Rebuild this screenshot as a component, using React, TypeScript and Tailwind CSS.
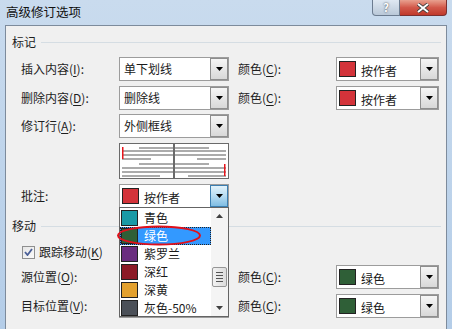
import React from 'react';

const font = "font-['Noto_Sans_CJK_SC',sans-serif]";

function Arrow({ active = false }: { active?: boolean }) {
  return (
    <div
      className={
        active
          ? 'flex w-[18px] items-center justify-center border border-[#3c7fb1] bg-gradient-to-b from-[#e3f3fb] via-[#b6dcf2] to-[#7fbde3]'
          : 'flex w-[18px] items-center justify-center border border-[#8e8e8e] bg-gradient-to-b from-[#f6f6f6] to-[#d8d8d8]'
      }
    >
      <svg width="7" height="4" viewBox="0 0 7 4">
        <path d="M0 0h7L3.5 4z" fill="#000" />
      </svg>
    </div>
  );
}

function Combo({
  w,
  text,
  swatch,
  active = false,
}: {
  w: string;
  text: string;
  swatch?: string;
  active?: boolean;
}) {
  return (
    <div className={`flex h-[24px] ${w} border border-[#9c9c9c] bg-white`}>
      <div className="flex flex-1 items-center gap-[5px] pl-[2px]">
        {swatch && (
          <div className="h-[16px] w-[17px] border border-[#222]" style={{ background: swatch }} />
        )}
        <span className={swatch ? 'text-[12px] text-[#1a1a1a] pt-[3px]' : 'pl-[2px] text-[12px] text-[#1a1a1a]'}>
          {text}
        </span>
      </div>
      <Arrow active={active} />
    </div>
  );
}

function Label({ text, k, w = 'w-[98px]' }: { text: string; k: string; w?: string }) {
  if (!k) return <div className={`${w} text-[12px] text-[#1e1e1e]`}>{text}:</div>;
  return (
    <div className={`${w} text-[12px] text-[#1e1e1e]`}>
      {text}(<span className="underline underline-offset-2">{k}</span>):
    </div>
  );
}

function Row({ label, k, combo, color, mt }: { label: string; k: string; combo: React.ReactNode; color?: string; mt: string }) {
  return (
    <div className={`${mt} flex items-center pl-[15px]`}>
      <Label text={label} k={k} />
      {combo}
      {color && (
        <>
          <div className="ml-[9px]">
            <Label text="颜色" k="C" />
          </div>
          <Combo w="w-[103px]" text={color === 'red' ? '按作者' : '绿色'} swatch={color === 'red' ? '#d3333a' : '#2f5f37'} />
        </>
      )}
    </div>
  );
}

function Header({ text, mt }: { text: string; mt: string }) {
  return (
    <div className={`${mt} flex h-[16px] items-center pl-[6px] pr-[5px]`}>
      <span className="text-[12px] text-[#1e1e1e]">{text}</span>
      <div className="ml-[5px] h-px flex-1 bg-[#d5dde3]" />
    </div>
  );
}

function Preview({ mirror }: { mirror?: boolean }) {
  const lines = [
    [19, 53, 4],
    [2, 53, 7],
    [2, 53, 11],
    [2, 31, 15],
    [19, 53, 20],
    [2, 53, 24],
    [2, 53, 28],
    [2, 40, 32],
  ];
  return (
    <div className="h-[36px] w-[55px] border border-[#6a6a6a] bg-white">
      <svg width="53" height="34" viewBox="0 0 53 34">
        {lines.map(([a, b, y], i) => {
          const x1 = mirror ? 53 - b : a;
          const x2 = mirror ? 53 - a : b;
          return <rect key={i} x={x1} y={y - 1} width={x2 - x1} height="2" fill="#ababab" />;
        })}
        {mirror ? (
          <rect x="49" y="20" width="1.5" height="12" fill="#e8141b" />
        ) : (
          <rect x="2" y="3" width="1.5" height="12" fill="#e8141b" />
        )}
      </svg>
    </div>
  );
}

const items = [
  ['青色', '#1a9aa6'],
  ['绿色', '#2f5f37'],
  ['紫罗兰', '#6a2d7f'],
  ['深红', '#8c1a26'],
  ['深黄', '#e3a12f'],
  ['灰色-50%', '#4b5058'],
];

function DropList() {
  return (
    <div className="absolute left-[113px] top-[181px] flex h-[110px] w-[110px] border border-[#646464] bg-white">
      <div className="flex flex-1 flex-col pt-px">
        {items.map(([name, c], i) => (
          <div
            key={name}
            className={
              i === 1
                ? 'flex h-[18px] items-center gap-[6px] border border-dotted border-[#222] bg-[#3399ff] text-white'
                : 'flex h-[18px] items-center gap-[6px] border border-transparent text-[#1a1a1a]'
            }
          >
            <div className="h-[16px] w-[17px] border border-[#222]" style={{ background: c }} />
            <span className="text-[12px]">{name}</span>
          </div>
        ))}
      </div>
      <div className="flex w-[17px] flex-col items-center justify-between bg-[#f4f4f4] py-[6px]">
        <svg width="7" height="4" viewBox="0 0 7 4">
          <path d="M0 4h7L3.5 0z" fill="#404040" />
        </svg>
        <div className="mt-[49px] flex h-[20px] w-[15px] flex-col items-center justify-center gap-[2px] rounded-[2px] border border-[#969696] bg-gradient-to-r from-[#f2f2f2] to-[#dcdcdc]">
          <div className="h-px w-[7px] bg-[#555]" />
          <div className="h-px w-[7px] bg-[#555]" />
          <div className="h-px w-[7px] bg-[#555]" />
          <div className="h-px w-[7px] bg-[#555]" />
        </div>
        <div className="flex-1" />
        <svg width="7" height="4" viewBox="0 0 7 4">
          <path d="M0 0h7L3.5 4z" fill="#404040" />
        </svg>
      </div>
      <svg className="absolute left-[-4px] top-[17px]" width="90" height="22" viewBox="0 0 90 22">
        <ellipse cx="43" cy="10.5" rx="41" ry="9" fill="none" stroke="#e0101a" strokeWidth="2" />
      </svg>
    </div>
  );
}

export default function App() {
  return (
    <div className={`${font} relative h-[329px] w-[452px] overflow-hidden bg-gradient-to-b from-[#c9dbee] to-[#b4cde8]`}>
      <div className="flex h-[25px] items-start">
        <div className="pl-[6px] pt-[3px] text-[12.5px] text-[#111]">高级修订选项</div>
        <div className="flex-1" />
        <div className="flex h-[16px] w-[28px] items-center justify-center rounded-bl-[4px] border border-t-0 border-[#6c7c90] bg-gradient-to-b from-[#dfe8f2] to-[#b9c8d8] text-[11px] font-bold text-white [text-shadow:0_0_2px_#333]">
          ?
        </div>
        <div className="mr-[5px] flex h-[16px] w-[47px] items-center justify-center rounded-br-[4px] border border-l-0 border-t-0 border-[#7a3030] bg-gradient-to-b from-[#e8a08f] via-[#d2584a] to-[#c0392b]">
          <svg width="12" height="10" viewBox="0 0 12 10">
            <path d="M1 1l10 8M11 1L1 9" stroke="#3a3a3a" strokeWidth="3.6" />
            <path d="M1 1l10 8M11 1L1 9" stroke="#fff" strokeWidth="2" />
          </svg>
        </div>
      </div>
      <div className="relative mx-[5px] h-[310px] border border-b-0 border-[#7d8b9c] bg-[#f0f0f0]">
        <Header text="标记" mt="mt-[8px]" />
        <Row label="插入内容" k="I" mt="mt-[7px]" combo={<Combo w="w-[110px]" text="单下划线" />} color="red" />
        <Row label="删除内容" k="D" mt="mt-[5px]" combo={<Combo w="w-[110px]" text="删除线" />} color="red" />
        <Row label="修订行" k="A" mt="mt-[4px]" combo={<Combo w="w-[110px]" text="外侧框线" />} />
        <div className="mt-[5px] flex pl-[113px]">
          <Preview />
          <Preview mirror />
        </div>
        <Row label="批注" k="" mt="mt-[5px]" combo={<Combo w="w-[110px]" text="按作者" swatch="#d3333a" active />} />
        <Header text="移动" mt="mt-[10px]" />
        <div className="mt-[10px] flex h-[16px] items-center gap-[4px] pl-[16px]">
          <div className="flex h-[13px] w-[13px] items-center justify-center border border-[#8e8f8f] bg-gradient-to-br from-[#e6e6e6] to-[#fafafa]">
            <svg width="9" height="8" viewBox="0 0 9 8">
              <path d="M1 4l2.5 3L8 1" fill="none" stroke="#4a5f97" strokeWidth="1.8" />
            </svg>
          </div>
          <span className="text-[12px] text-[#1e1e1e]">
            跟踪移动(<span className="underline underline-offset-2">K</span>)
          </span>
        </div>
        <Row label="源位置" k="O" mt="mt-[5px]" combo={<Combo w="w-[110px]" text="" />} color="green" />
        <Row label="目标位置" k="V" mt="mt-[5px]" combo={<Combo w="w-[110px]" text="" />} color="green" />
        <DropList />
      </div>
    </div>
  );
}
